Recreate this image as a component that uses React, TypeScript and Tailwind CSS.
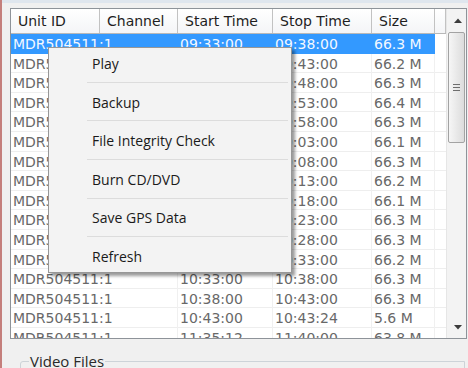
import React from 'react';

const rows: [string, string, string][] = [
  ['09:33:00', '09:38:00', '66.3 M'],
  ['09:38:00', '09:43:00', '66.2 M'],
  ['09:43:00', '09:48:00', '66.3 M'],
  ['09:48:00', '09:53:00', '66.4 M'],
  ['09:53:00', '09:58:00', '66.3 M'],
  ['09:58:00', '10:03:00', '66.1 M'],
  ['10:03:00', '10:08:00', '66.3 M'],
  ['10:08:00', '10:13:00', '66.2 M'],
  ['10:13:00', '10:18:00', '66.1 M'],
  ['10:18:00', '10:23:00', '66.3 M'],
  ['10:23:00', '10:28:00', '66.3 M'],
  ['10:28:00', '10:33:00', '66.2 M'],
  ['10:33:00', '10:38:00', '66.3 M'],
  ['10:38:00', '10:43:00', '66.3 M'],
  ['10:43:00', '10:43:24', '5.6 M'],
  ['11:35:12', '11:40:00', '63.8 M'],
];

const menuItems = ['Play', 'Backup', 'File Integrity Check', 'Burn CD/DVD', 'Save GPS Data', 'Refresh'];

const cols = 'grid grid-cols-[89px_78px_95px_99px_63px_1fr]';

function Arrow({ down }: { down?: boolean }) {
  return (
    <svg width="8" height="5" viewBox="0 0 8 5" className={down ? 'rotate-180' : ''}>
      <path d="M0 5 L4 0.5 L8 5 Z" fill="#3c3c3c" />
    </svg>
  );
}

export default function App() {
  return (
    <div className="relative flex h-[368px] w-[468px] flex-col overflow-hidden border-l-2 border-[#c47f7c] bg-[#f0f0f0] font-['DejaVu_Sans',sans-serif]">
      <div className="h-[3px] shrink-0 bg-[#dfe6ee]" />

      {/* list view */}
      <div className="ml-[8px] mt-[5px] flex h-[331px] w-[457px] shrink-0 border border-[#8e9399] bg-white">
        <div className="flex w-[435px] flex-col overflow-hidden">
          <div className={`${cols} h-[25px] shrink-0 border-b border-[#b8b8b8] bg-gradient-to-b from-white to-[#f4f5f7] text-[14px] text-[#1e1e1e]`}>
            {['Unit ID', 'Channel', 'Start Time', 'Stop Time', 'Size', ''].map((h, i) => (
              <div key={i} className="flex items-center whitespace-nowrap border-r border-[#c2c2c2] pl-[7px]">
                {h}
              </div>
            ))}
          </div>
          {rows.map((r, i) => {
            const sel = i === 0;
            const cell = 'flex items-center whitespace-nowrap pl-[2px]';
            const line = sel ? '' : 'border-r border-[#f0f0f0]';
            return (
              <div
                key={i}
                className={`${cols} h-[19.6px] shrink-0 text-[14px] ${
                  sel ? 'bg-[#3399ff] text-[#f4f8ff]' : 'border-b border-[#eeeeee] text-[#686868]'
                }`}
              >
                <div className={cell}>MDR504511:1</div>
                <div className={`${cell} ${line}`} />
                <div className={`${cell} ${line}`}>{r[0]}</div>
                <div className={`${cell} ${line}`}>{r[1]}</div>
                <div className={`${cell} ${line}`}>{r[2]}</div>
                <div className={sel ? 'bg-white' : ''} />
              </div>
            );
          })}
        </div>

        {/* scrollbar */}
        <div className="flex w-[20px] flex-col border-l border-[#e6e6e6] bg-[#f3f3f3]">
          <div className="flex h-[22px] shrink-0 items-center justify-center pl-[2px]">
            <Arrow />
          </div>
          <div className="ml-[1px] mr-[1px] mt-[1px] flex h-[111px] shrink-0 flex-col items-center justify-center gap-[2px] rounded-[2px] border border-[#a3a3a3] bg-gradient-to-r from-[#f6f6f6] to-[#dcdcdc]">
            <div className="h-px w-[7px] bg-[#6e6e6e]" />
            <div className="h-px w-[7px] bg-[#6e6e6e]" />
            <div className="h-px w-[7px] bg-[#6e6e6e]" />
          </div>
          <div className="flex-1" />
          <div className="flex h-[22px] shrink-0 items-center justify-center pl-[2px]">
            <Arrow down />
          </div>
        </div>
      </div>

      <fieldset className="ml-[18px] mr-[3px] mt-[12px] h-[40px] shrink-0 rounded-tl-[3px] border border-[#cdd3d8]">
        <legend className="ml-[8px] px-[1px] font-['Open_Sans',sans-serif] text-[15px] leading-[20px] text-[#2a2a2a]">Video Files</legend>
      </fieldset>

      {/* context menu */}
      <div className="absolute left-[46px] top-[47px] flex w-[244px] flex-col border border-[#979797] bg-[#f3f3f3] font-['Open_Sans',sans-serif] text-[14px] text-[#1a1a1a] shadow-[3px_3px_3px_rgba(0,0,0,0.4)]">
        {menuItems.map((m, i) => (
          <React.Fragment key={m}>
            {i > 0 && (
              <div className="flex h-[7.6px] items-center pl-[38px] pr-[3px]">
                <div className="h-[2px] w-full border-t border-[#dcdcdc] border-b-white" />
              </div>
            )}
            <div className="flex h-[31px] items-center pl-[43px]">{m}</div>
          </React.Fragment>
        ))}
      </div>
    </div>
  );
}
